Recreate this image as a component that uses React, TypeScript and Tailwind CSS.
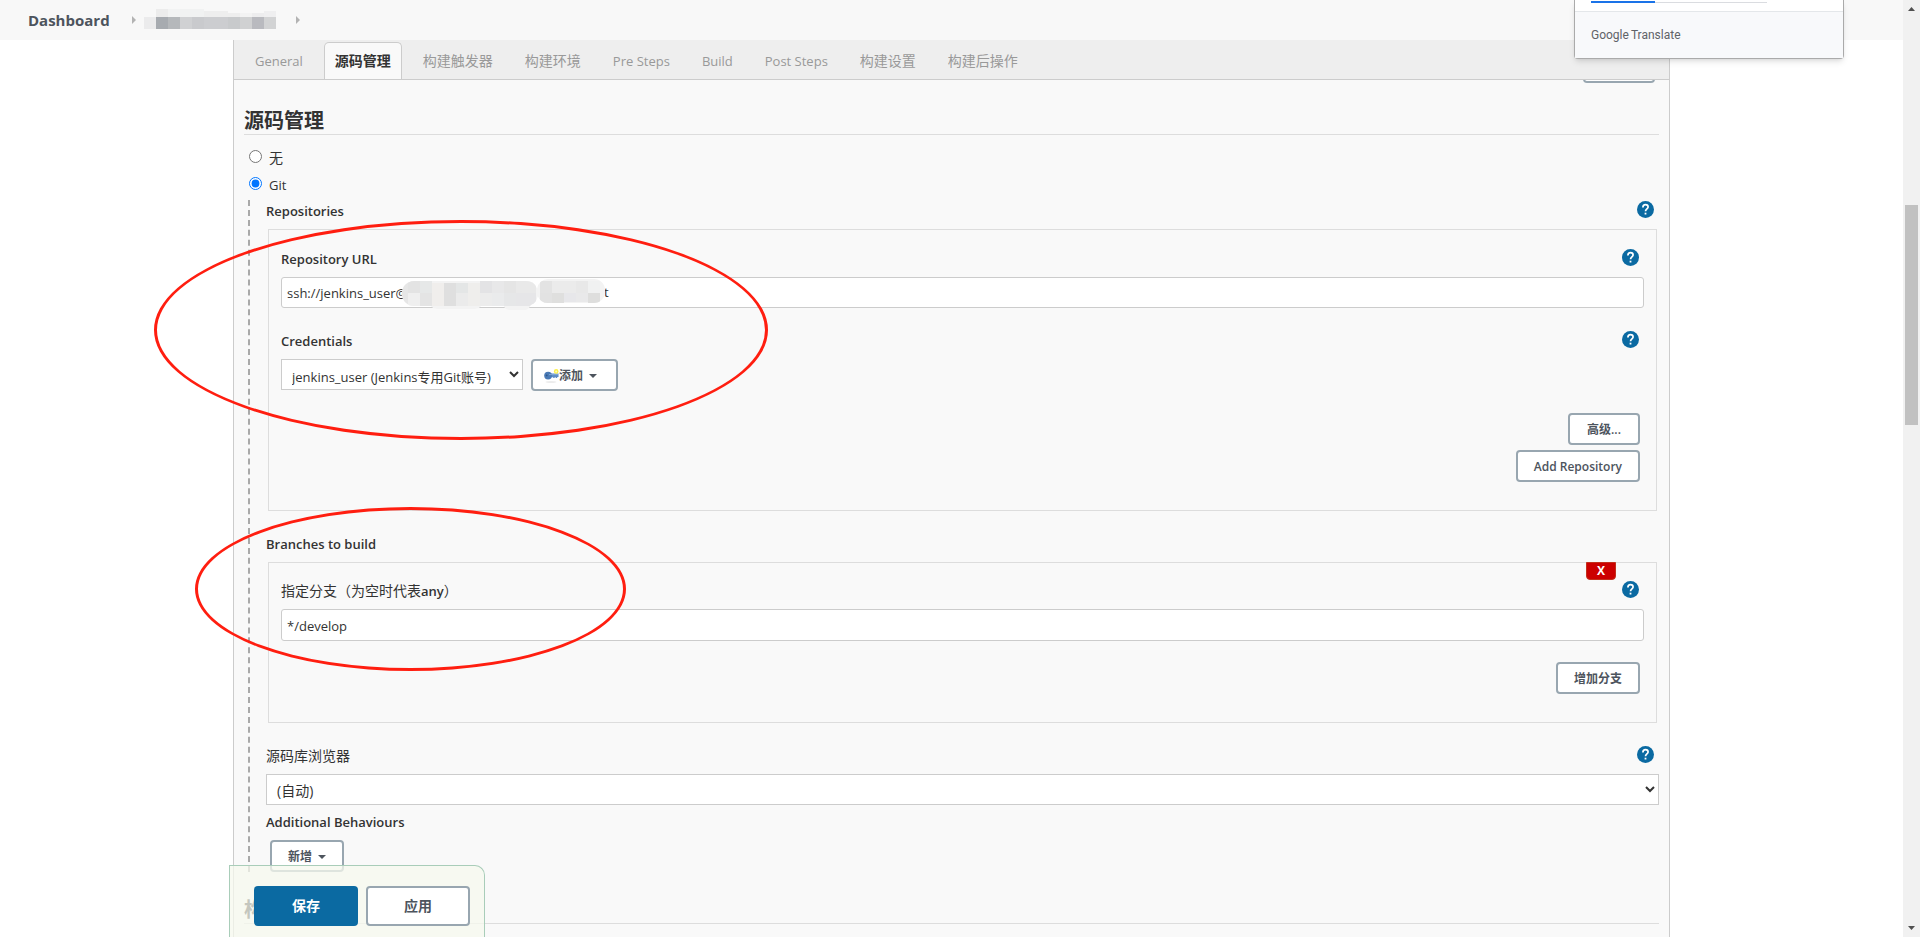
import React, { FC, ReactNode, useState } from 'react';

interface FieldLabelProps {
  children: ReactNode;
  htmlFor?: string;
  help?: boolean;
  cjk?: boolean;
}

interface MosaicTile {
  x: number;
  y: number;
  w: number;
  h: number;
  fill: string;
}

const TABS = [
  { name: 'General', cjk: false },
  { name: '源码管理', cjk: true },
  { name: '构建触发器', cjk: true },
  { name: '构建环境', cjk: true },
  { name: 'Pre Steps', cjk: false },
  { name: 'Build', cjk: false },
  { name: 'Post Steps', cjk: false },
  { name: '构建设置', cjk: true },
  { name: '构建后操作', cjk: true },
];

//Tiles that hide the project name in the breadcrumb
const CRUMB_TILES: MosaicTile[] = [
  { x: 2, y: 12, w: 12, h: 12, fill: '#ebebec' },
  { x: 14, y: 4, w: 12, h: 8, fill: '#ececec' },
  { x: 26, y: 4, w: 12, h: 8, fill: '#f2f3f3' },
  { x: 38, y: 4, w: 24, h: 8, fill: '#f1f2f2' },
  { x: 62, y: 6, w: 24, h: 6, fill: '#eeeeee' },
  { x: 86, y: 8, w: 12, h: 4, fill: '#eeeeee' },
  { x: 98, y: 8, w: 12, h: 4, fill: '#f3f3f3' },
  { x: 110, y: 8, w: 12, h: 4, fill: '#ededee' },
  { x: 122, y: 6, w: 12, h: 6, fill: '#efeff0' },
  { x: 14, y: 12, w: 12, h: 12, fill: '#a7abb0' },
  { x: 26, y: 12, w: 12, h: 12, fill: '#b5b8bb' },
  { x: 38, y: 12, w: 12, h: 12, fill: '#d0d1d3' },
  { x: 50, y: 12, w: 12, h: 12, fill: '#c9cacd' },
  { x: 62, y: 12, w: 24, h: 12, fill: '#cccdd0' },
  { x: 86, y: 12, w: 12, h: 12, fill: '#c8cacc' },
  { x: 98, y: 12, w: 12, h: 12, fill: '#d0d1d2' },
  { x: 110, y: 12, w: 12, h: 12, fill: '#b9babf' },
  { x: 122, y: 12, w: 12, h: 12, fill: '#d2d3d4' },
];

//Tiles that hide the host part of the repository url
const URL_TILES: MosaicTile[] = [
  { x: 0, y: 4, w: 7, h: 25, fill: '#e6e6e6' },
  { x: 7, y: 4, w: 12, h: 12, fill: '#e3e3e3' },
  { x: 7, y: 16, w: 12, h: 13, fill: '#efefef' },
  { x: 19, y: 4, w: 12, h: 12, fill: '#e6e8e8' },
  { x: 19, y: 16, w: 12, h: 13, fill: '#e4e4e4' },
  { x: 31, y: 6, w: 12, h: 23, fill: '#f0eeec' },
  { x: 43, y: 6, w: 12, h: 23, fill: '#dfdfdf' },
  { x: 55, y: 6, w: 12, h: 10, fill: '#e4e6e6' },
  { x: 55, y: 16, w: 12, h: 13, fill: '#ebebeb' },
  { x: 67, y: 6, w: 12, h: 23, fill: '#efeeec' },
  { x: 79, y: 4, w: 12, h: 12, fill: '#e3e3e5' },
  { x: 79, y: 16, w: 12, h: 13, fill: '#ececec' },
  { x: 91, y: 4, w: 12, h: 12, fill: '#e8e8e9' },
  { x: 91, y: 16, w: 12, h: 13, fill: '#eaebec' },
  { x: 103, y: 4, w: 12, h: 12, fill: '#e5e5e5' },
  { x: 103, y: 16, w: 12, h: 13, fill: '#e6e7e8' },
  { x: 115, y: 4, w: 20, h: 12, fill: '#e9e9e9' },
  { x: 115, y: 16, w: 20, h: 13, fill: '#e6e6e8' },
  { x: 139, y: 4, w: 12, h: 12, fill: '#e3e3e3' },
  { x: 139, y: 16, w: 12, h: 12, fill: '#e2e2e2' },
  { x: 151, y: 4, w: 24, h: 12, fill: '#ebebeb' },
  { x: 151, y: 16, w: 12, h: 10, fill: '#dfdfde' },
  { x: 163, y: 16, w: 12, h: 9, fill: '#e7e7ea' },
  { x: 175, y: 4, w: 12, h: 12, fill: '#e8e8e8' },
  { x: 175, y: 16, w: 12, h: 9, fill: '#e9e9ea' },
  { x: 187, y: 4, w: 12, h: 12, fill: '#f0f1f1' },
  { x: 187, y: 16, w: 12, h: 10, fill: '#dededd' },
];

const Tiles: FC<{ tiles: MosaicTile[] }> = ({ tiles }) => (
  <>
    {tiles.map((t) => (
      <rect key={`${t.x}-${t.y}`} x={t.x} y={t.y} width={t.w} height={t.h} fill={t.fill} />
    ))}
  </>
);

const CrumbArrow: FC = () => (
  <svg width="4" height="8" viewBox="0 0 4 8" aria-hidden="true">
    <path d="M0 0 L4 4 L0 8 Z" fill="#b3b3b3" />
  </svg>
);

const Caret: FC = () => (
  <svg width="8" height="4" viewBox="0 0 8 4" aria-hidden="true">
    <path d="M0 0 H8 L4 4 Z" fill="#4d545d" />
  </svg>
);

const KeyIcon: FC = () => (
  <svg width="15" height="14" viewBox="0 0 15 14" aria-hidden="true">
    <ellipse cx="7" cy="13" rx="5.5" ry="0.7" fill="#e6e6e6" />
    <path d="M6 4.6 H14.5 V8 H13.2 V9 H11.8 V8.2 H10.6 V9 H9.2 V8.2 H6 Z" fill="#5d8cc5" />
    <circle cx="4.1" cy="6.6" r="3.9" fill="#4a7ab5" />
    <circle cx="2.7" cy="6.4" r="0.9" fill="#2f5688" />
    <path d="M5 5.6 H14" stroke="#86abd8" strokeWidth="0.9" />
    <circle cx="12.2" cy="2.4" r="2.3" fill="#fbf04b" />
    <circle cx="12.2" cy="2.4" r="1" fill="#fffbc0" />
  </svg>
);

const HelpButton: FC = () => (
  <button type="button" aria-label="Help" className="block pb-[3px]">
    <svg width="17" height="17" viewBox="0 0 17 17" aria-hidden="true">
      <circle cx="8.5" cy="8.5" r="8.5" fill="#0b6aa2" />
      <path
        d="M5.9 6.4 C5.9 4.7 7 3.7 8.5 3.7 C10 3.7 11.1 4.7 11.1 6.1 C11.1 7.9 8.5 8.1 8.5 10.3"
        fill="none"
        stroke="#fff"
        strokeWidth="1.7"
      />
      <rect x="7.6" y="11.7" width="1.8" height="1.8" fill="#fff" />
    </svg>
  </button>
);

const FieldLabel: FC<FieldLabelProps> = ({ children, htmlFor, help = true, cjk = false }) => {
  const textClass = cjk ? 'text-sm leading-[22px]' : 'font-semibold';

  return (
    <div className="mb-[7px] flex h-[22px] items-center justify-between pr-[5px]">
      {htmlFor ? (
        <label htmlFor={htmlFor} className={textClass}>{children}</label>
      ) : (
        <span className={textClass}>{children}</span>
      )}
      {help && <HelpButton />}
    </div>
  );
};

const OutlineButton: FC<{ children: ReactNode }> = ({ children }) => (
  <button
    type="button"
    className="flex h-8 min-w-[72px] items-center justify-center rounded border-2 border-[#98a6b0] bg-white px-4 pt-0.5 text-xs font-semibold text-[#4d545d]"
  >
    {children}
  </button>
);

const SectionTitle: FC<{ children: ReactNode }> = ({ children }) => (
  <h2 className="mt-[23px] h-[29px] border-b border-[#ddd] text-xl leading-[30px] font-bold">{children}</h2>
);

const Scrollbar: FC = () => (
  <div className="flex w-[17px] shrink-0 flex-col items-center justify-between bg-[#f1f1f1] py-[7px]">
    <svg width="7" height="4" viewBox="0 0 7 4" aria-hidden="true">
      <path d="M0 4 H7 L3.5 0 Z" fill="#505050" />
    </svg>
    <div className="mt-[194px] mb-auto h-[220px] w-[13px] bg-[#c1c1c1]" />
    <svg width="7" height="4" viewBox="0 0 7 4" aria-hidden="true">
      <path d="M0 0 H7 L3.5 4 Z" fill="#505050" />
    </svg>
  </div>
);

const App: FC = () => {
  const [activeTab, setActiveTab] = useState('源码管理');
  const [scm, setScm] = useState('git');
  const [url, setUrl] = useState('ssh://jenkins_user@');
  const [branch, setBranch] = useState('*/develop');

  const tabClass = (name: string, cjk: boolean): string => {
    if (name === activeTab) {
      return 'mx-[5px] h-[37px] rounded-t-[5px] border border-b-0 border-[#ccc] bg-[#f9f9f9] px-2.5 text-sm font-semibold whitespace-nowrap';
    }
    return cjk
      ? 'mx-1.5 h-[37px] px-2.5 text-sm whitespace-nowrap text-[#999]'
      : 'mx-1.5 h-[37px] px-2.5 text-[13px] whitespace-nowrap text-[#999]';
  };

  return (
    <div className="flex h-screen overflow-hidden bg-white font-['Open_Sans','Noto_Sans_CJK_SC',sans-serif] text-[13px] leading-[22px] text-[#333]">
      <div className="relative flex min-w-0 flex-1 flex-col overflow-hidden">
        <nav className="flex h-10 shrink-0 items-center bg-[#f8f8f8] pl-7 text-[15px] font-bold text-[#4d545d]">
          <a href="#dashboard" className="mr-[22px]">Dashboard</a>
          <CrumbArrow />
          <svg className="mr-[18px] ml-1.5" width="136" height="30" viewBox="0 0 136 30" aria-hidden="true">
            <Tiles tiles={CRUMB_TILES} />
          </svg>
          <CrumbArrow />
        </nav>

        <main className="relative mx-[233px] flex-1 border-x border-[#ccc] bg-[#f9f9f9]">
          <div className="flex h-10 items-end border-b border-[#ccc] bg-[#eee] pl-[5px]" role="tablist">
            {TABS.map(({ name, cjk }) => (
              <button
                key={name}
                type="button"
                role="tab"
                aria-selected={name === activeTab}
                onClick={() => setActiveTab(name)}
                className={tabClass(name, cjk)}
              >
                {name}
              </button>
            ))}
          </div>

          <div className="px-2.5">
            {/* bottom edge of the button scrolled under the tab bar */}
            <div className="flex h-[3px] items-end justify-end overflow-hidden pr-1">
              <button
                type="button"
                aria-label="Advanced"
                className="h-8 w-[72px] shrink-0 rounded border-2 border-[#98a6b0] bg-white"
              />
            </div>

            <SectionTitle>源码管理</SectionTitle>

            <div className="mt-[9px]">
              <div className="flex h-[27px] items-center gap-[7px] pl-[5px]">
                <input
                  id="scm-none"
                  type="radio"
                  name="scm"
                  className="mb-0.5 h-[13px] w-[13px]"
                  checked={scm === 'none'}
                  onChange={() => setScm('none')}
                />
                <label htmlFor="scm-none" className="text-sm">无</label>
              </div>
              <div className="flex h-[27px] items-center gap-[7px] pl-[5px]">
                <input
                  id="scm-git"
                  type="radio"
                  name="scm"
                  className="mb-0.5 h-[13px] w-[13px]"
                  checked={scm === 'git'}
                  onChange={() => setScm('git')}
                />
                <label htmlFor="scm-git">Git</label>
              </div>
            </div>

            <div className="mt-0.5 ml-1 border-l-2 border-dashed border-[#a9a9a9] pl-4">
              <FieldLabel>Repositories</FieldLabel>
              <section className="mx-0.5 border border-[#ddd] px-3 pt-[18px] pb-7">
                <FieldLabel htmlFor="repo-url">Repository URL</FieldLabel>
                <div className="relative">
                  <input
                    id="repo-url"
                    type="text"
                    value={url}
                    onChange={(e) => setUrl(e.target.value)}
                    className="block h-[31px] w-full rounded-[3px] border border-[#ccc] bg-white px-[5px]"
                  />
                  <span className="absolute top-1 left-[323px]">t</span>
                  <svg className="absolute top-0 left-[120px]" width="206" height="34" viewBox="0 0 206 34" aria-hidden="true">
                    <clipPath id="smudge">
                      <rect x="1" y="4" width="136" height="25" rx="12" />
                      <rect x="28" y="16" width="54" height="16" rx="8" />
                      <rect x="102" y="18" width="28" height="15" rx="7" />
                      <rect x="136" y="2" width="68" height="24" rx="11" />
                    </clipPath>
                    <g clipPath="url(#smudge)">
                      <rect width="206" height="34" fill="#f3f3f3" />
                      <Tiles tiles={URL_TILES} />
                    </g>
                  </svg>
                </div>

                <div className="mt-[22px]">
                  <FieldLabel htmlFor="credentials">Credentials</FieldLabel>
                  <div className="flex gap-2">
                    <select
                      id="credentials"
                      className="h-[31px] w-[242px] border border-[#ccc] bg-white pt-1 pl-1.5"
                    >
                      <option>jenkins_user (Jenkins专用Git账号)</option>
                    </select>
                    <button
                      type="button"
                      className="flex h-8 w-[87px] items-center rounded border-2 border-[#98a6b0] bg-white pt-0.5 pl-[11px] text-xs font-semibold text-[#4d545d]"
                    >
                      <KeyIcon />
                      <span className="mr-1.5">添加</span>
                      <Caret />
                    </button>
                  </div>
                </div>

                <div className="mt-[22px] flex flex-col items-end gap-[5px] pr-1">
                  <OutlineButton>高级...</OutlineButton>
                  <OutlineButton>Add Repository</OutlineButton>
                </div>
              </section>

              <div className="mt-[22px]">
                <FieldLabel help={false}>Branches to build</FieldLabel>
                <section className="relative mx-0.5 border border-[#ddd] px-3 pt-[17px] pb-7">
                  <button
                    type="button"
                    className="absolute -top-px right-10 h-[18px] w-[30px] rounded-b border border-[#c3301c] bg-[#c00] text-xs leading-4 font-bold text-white"
                  >
                    X
                  </button>
                  <FieldLabel htmlFor="branch" cjk>
                    指定分支（为空时代表<span className="text-[13px] font-semibold">any</span>）
                  </FieldLabel>
                  <input
                    id="branch"
                    type="text"
                    value={branch}
                    onChange={(e) => setBranch(e.target.value)}
                    className="block h-8 w-full rounded-[3px] border border-[#ccc] bg-white px-[5px] pt-0.5"
                  />
                  <div className="mt-[21px] flex justify-end pr-1">
                    <OutlineButton>增加分支</OutlineButton>
                  </div>
                </section>
              </div>

              <div className="mt-[22px]">
                <FieldLabel htmlFor="browser" cjk>源码库浏览器</FieldLabel>
                <select id="browser" className="block h-[31px] w-full border border-[#ccc] bg-white pt-0.5 pl-1.5 text-sm">
                  <option>(自动)</option>
                </select>
              </div>

              <div className="mt-1.5">
                <FieldLabel help={false}>Additional Behaviours</FieldLabel>
                <div className="flex pl-1">
                  <OutlineButton>
                    <span className="mr-1.5">新增</span>
                    <Caret />
                  </OutlineButton>
                </div>
              </div>
            </div>

            <SectionTitle>构建触发器</SectionTitle>
          </div>

          {/* sticky save bar */}
          <div className="absolute bottom-0 -left-[5px] flex gap-2 rounded-tr-[10px] border border-b-0 border-[#a9cdb9] bg-[#f5f8ed]/75 pt-5 pr-3.5 pb-[11px] pl-6 text-sm font-bold">
            <button type="submit" className="h-10 w-[104px] rounded bg-[#0b6aa2] text-white">保存</button>
            <button type="button" className="h-10 w-[104px] rounded border-2 border-[#98a6b0] bg-white text-[#4d545d]">
              应用
            </button>
          </div>
        </main>

        {/* hand-drawn highlights */}
        <div className="pointer-events-none absolute top-[220px] left-[154px] h-[220px] w-[614px] rounded-[50%] border-3 border-[#ff1e10]" />
        <div className="pointer-events-none absolute top-[507px] left-[195px] h-[164px] w-[431px] rounded-[50%] border-3 border-[#ff1e10]" />

        {/* browser translate popup */}
        <aside className="absolute top-0 right-[59px] w-[270px] rounded-b border border-t-0 border-[#aaa] bg-white shadow-md">
          <div className="flex h-[11px] items-start px-4 pt-px">
            <div className="h-0.5 w-16 bg-[#1a73e8]" />
            <div className="mt-px h-px w-28 bg-[#dadce0]" />
          </div>
          <div className="flex h-[47px] items-center gap-0.5 border-t border-[#e4e7ea] bg-[#f8f9fb] px-4 font-['Roboto',sans-serif] text-xs text-[#5f6368]">
            <span>Google</span>
            <span>Translate</span>
          </div>
        </aside>
      </div>
      <Scrollbar />
    </div>
  );
};

export default App;
